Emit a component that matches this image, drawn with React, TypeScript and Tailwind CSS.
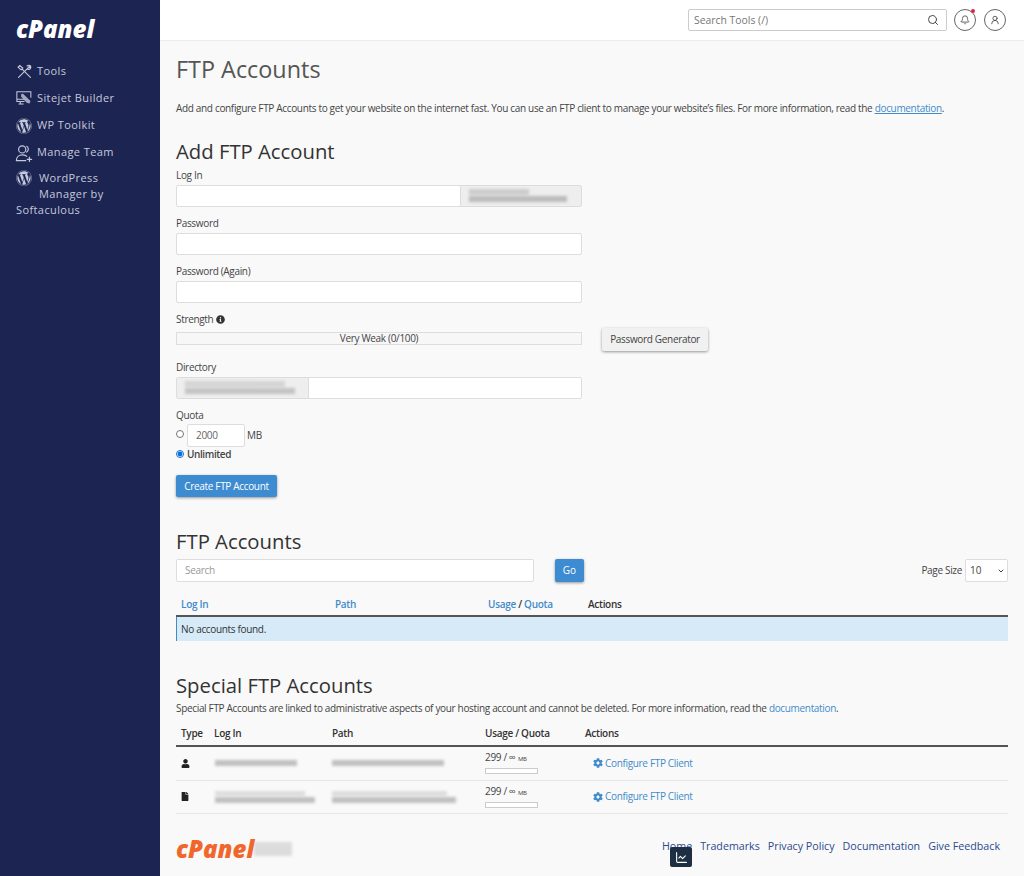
import { Bell, ChartLine, ChevronDown, Search, UserRound } from "lucide-react";
import { FaCog, FaFile, FaInfoCircle, FaUser, FaWordpress } from "react-icons/fa";

const font = { fontFamily: '"Open Sans", sans-serif' };

const ToolsIcon = () => (
  <svg viewBox="0 0 20 20" className="w-[17px] h-[17px] shrink-0" fill="none" stroke="currentColor" strokeWidth="1.300" strokeLinecap="round">
    <path d="M3 17 14.500 5.500" />
    <path d="M13 3.500c1-1 2.500-1 3.500-.5L14.600 5l.7.8 2-1.800c.4 1-.1 2.400-1 3.200-.8.6-1.700.6-2.400.3" />
    <path d="M17 17 7.500 7.500" />
    <path d="M2.500 5 4.500 3 8 6 6 8z" />
  </svg>
);

const SitejetIcon = () => (
  <svg viewBox="0 0 20 20" className="w-[17px] h-[17px] shrink-0" fill="none" stroke="currentColor" strokeWidth="1.200">
    <path d="M10 13.500H1V2h16.500v7" />
    <path d="M1 11h9M5 13.500v3M3 16.500h6" />
    <path d="M6 5l2-1 9 9-1 3-3-.6-7-7.400z" fill="currentColor" stroke="none" opacity="0.8" />
  </svg>
);

const TeamIcon = () => (
  <svg viewBox="0 0 20 20" className="w-[18px] h-[18px] shrink-0" fill="none" stroke="currentColor" strokeWidth="1.300" strokeLinecap="round">
    <circle cx="8" cy="6" r="4" />
    <path d="M1.500 18.500c0-4 3-6.500 6.500-6.500 2 0 3.500.5 5 1.500M1.500 18.500H12" />
    <path d="M13 2.500c2.200.8 2.500 5 0 6.500" />
    <path d="M16 14.500v5M13.500 17h5" />
  </svg>
);

const NavItem = ({ icon, label }: { icon: React.ReactNode; label: string }) => (
  <div className="flex items-center gap-[5px] h-[27px] text-[#c5c9dc] text-[11px] tracking-[0.4px]">
    <span className="w-[16px] flex justify-center">{icon}</span>
    <span>{label}</span>
  </div>
);

const Sidebar = () => (
  <aside className="w-[160px] shrink-0 bg-[#1c2452] pl-[16px] pt-[17px]">
    <div className="h-[41px] text-white text-[24px] font-extrabold italic leading-[24px]">cPanel</div>
    <div>
      <NavItem icon={<ToolsIcon />} label="Tools" />
      <NavItem icon={<SitejetIcon />} label="Sitejet Builder" />
      <NavItem icon={<FaWordpress className="w-[16px] h-[16px]" />} label="WP Toolkit" />
      <NavItem icon={<TeamIcon />} label="Manage Team" />
      <div className="pt-[4px] text-[#c5c9dc] text-[11px] leading-[16px] tracking-[0.4px]">
        <div className="flex items-center gap-[7px]">
          <FaWordpress className="w-[16px] h-[16px]" />
          <span>WordPress</span>
        </div>
        <div className="pl-[23px]">Manager by</div>
        <div>Softaculous</div>
      </div>
    </div>
  </aside>
);

const Header = () => (
  <header className="h-[41px] shrink-0 bg-white border-b border-[#ececec] flex items-center justify-end gap-[8px] pr-[18px]">
    <div className="w-[259px] h-[22px] border border-[#ccc] rounded-[2px] flex items-center justify-between px-[5px] mr-[-1px] text-[10.400px] text-[#777]">
      <span className="mt-[1px]">Search Tools (/)</span>
      <Search className="w-[12px] h-[12px] text-[#444] mr-[2px]" strokeWidth={2} />
    </div>
    <div className="relative w-[22px] h-[22px] rounded-full border border-[#666] flex items-center justify-center">
      <Bell className="w-[10px] h-[10px] text-[#444]" strokeWidth={2} />
      <span className="absolute -top-[1px] right-[0px] w-[4px] h-[4px] rounded-full bg-[#e0263c]" />
    </div>
    <div className="w-[22px] h-[22px] rounded-full border border-[#666] flex items-center justify-center">
      <UserRound className="w-[10px] h-[10px] text-[#444]" strokeWidth={2} />
    </div>
  </header>
);

const Blur = ({ className }: { className: string }) => <div className={`bg-[#9a9a9a] blur-[1.500px] ${className}`} />;

const Label = ({ children }: { children: React.ReactNode }) => (
  <div className="h-[22px] pt-[4px] text-[10px] tracking-[-0.33px] leading-[16px] font-medium text-[#444]">{children}</div>
);

const Field = () => <input className="block w-full h-[22px] bg-white border border-[#ddd] rounded-[2px] outline-none" />;

const AddForm = () => (
  <section className="mt-[8px]">
    <h2 className="h-[27px] text-[20.300px] leading-[30px] font-medium text-[#333]">Add FTP Account</h2>
    <div className="w-[406px]">
      <Label>Log In</Label>
      <div className="flex h-[22px] border border-[#ddd] rounded-[2px] overflow-hidden">
        <input className="w-[283px] bg-white outline-none" />
        <div className="flex-1 bg-[#eeeeee] border-l border-[#ddd] px-[8px] pt-[3px] flex flex-col gap-[1px]">
          <Blur className="w-[60px] h-[6px] opacity-40" />
          <Blur className="w-[98px] h-[6px] opacity-60" />
        </div>
      </div>
      <div className="mt-[4px]"><Label>Password</Label></div>
      <Field />
      <div className="mt-[4px]"><Label>Password (Again)</Label></div>
      <Field />
      <div className="mt-[4px]">
        <Label>
          <span className="inline-flex items-center gap-[3px]">Strength <FaInfoCircle className="w-[9px] h-[9px] text-[#333]" /></span>
        </Label>
      </div>
    </div>
    <div className="relative w-[406px] mt-[3px] h-[13px] bg-[#f7f7f7] border border-[#ddd] text-center text-[10px] tracking-[-0.33px] leading-[11px] text-[#444]">
      Very Weak (0/100)
      <button className="absolute left-[425px] -top-[5px] w-[106px] h-[23px] bg-[#f1f1f1] rounded-[2px] shadow-[0_1px_3px_rgba(0,0,0,0.4)] text-[10px] tracking-[-0.33px] text-[#444]">
        Password Generator
      </button>
    </div>
    <div className="w-[406px] mt-[10px]">
      <Label>Directory</Label>
      <div className="flex h-[22px] border border-[#ddd] rounded-[2px] overflow-hidden">
        <div className="w-[132px] bg-[#eeeeee] border-r border-[#ddd] px-[8px] pt-[3px] flex flex-col gap-[1px]">
          <Blur className="w-[100px] h-[6px] opacity-30" />
          <Blur className="w-[110px] h-[6px] opacity-50" />
        </div>
        <input className="flex-1 bg-white outline-none" />
      </div>
      <div className="mt-[4px]"><Label>Quota</Label></div>
      <div className="flex items-center h-[24px] -mt-[2px] text-[10px] tracking-[-0.33px] text-[#444]">
        <input type="radio" name="quota" className="w-[8px] h-[8px] m-0 -mt-[2px]" />
        <input defaultValue="2000" className="ml-[3px] w-[58px] h-[23px] bg-white border border-[#ddd] rounded-[2px] pl-[8px] text-[10px] tracking-[-0.33px] text-[#666] outline-none" />
        <span className="ml-[2px]">MB</span>
      </div>
      <div className="flex items-center gap-[3px] h-[16px] mt-[-1px] text-[10px] tracking-[-0.4px] font-semibold text-[#444]">
        <input type="radio" name="quota" defaultChecked className="w-[8px] h-[8px] m-0 accent-[#0a6fd8]" />
        Unlimited
      </div>
      <button className="mt-[13px] block w-[101px] h-[22px] bg-[#3d8bd0] rounded-[2px] shadow-[0_1px_3px_rgba(0,0,0,0.4)] text-[10px] tracking-[-0.33px] text-white">
        Create FTP Account
      </button>
    </div>
  </section>
);

const Accounts = () => (
  <section className="mt-[28px]">
    <h2 className="h-[34px] text-[20.300px] leading-[32px] font-medium text-[#333]">FTP Accounts</h2>
    <div className="flex items-center h-[23px]">
      <div className="w-[358px] h-[23px] bg-white border border-[#ddd] rounded-[2px] px-[8px] text-[10px] tracking-[-0.33px] leading-[21px] text-[#999]">Search</div>
      <button className="ml-[21px] w-[29px] h-[23px] bg-[#3d8bd0] rounded-[2px] shadow-[0_1px_3px_rgba(0,0,0,0.4)] text-[10px] text-white">Go</button>
      <span className="ml-auto text-[10px] tracking-[-0.33px] text-[#444]">Page Size</span>
      <div className="relative ml-[3px]">
        <select defaultValue="10" className="block appearance-none w-[43px] h-[23px] bg-white border border-[#ddd] rounded-[2px] pl-[4px] text-[10px] text-[#444] outline-none">
          <option>10</option>
        </select>
        <ChevronDown className="absolute right-[3px] top-[8px] w-[8px] h-[8px] text-[#444]" strokeWidth={3} />
      </div>
    </div>
    <div className="flex items-center h-[25px] mt-[10px] pt-[2px] pl-[5px] border-b-2 border-[#555] text-[10px] tracking-[-0.3px] font-semibold">
      <span className="w-[154px] text-[#428bca]">Log In</span>
      <span className="w-[153px] text-[#428bca]">Path</span>
      <span className="w-[100px] text-[#428bca]">Usage <span className="text-[#333]">/</span> Quota</span>
      <span className="text-[#333]">Actions</span>
    </div>
    <div className="h-[24px] pl-[4px] bg-[#d6eaf8] border-l border-[#428bca] text-[10px] tracking-[-0.33px] leading-[24px] text-[#333]">No accounts found.</div>
  </section>
);

const SpecialRow = ({ icon, two }: { icon: React.ReactNode; two?: boolean }) => (
  <div className="flex h-[33.500px] items-center border-b border-[#e6e6e6]">
    <span className="w-[38px] pl-[5px] text-[#222]">{icon}</span>
    <div className="w-[118px] pl-[1px] flex flex-col gap-[1px]">
      {two && <Blur className="w-[90px] h-[5px] opacity-30" />}
      <Blur className={two ? "w-[100px] h-[6px] opacity-60" : "w-[82px] h-[6px] opacity-60"} />
    </div>
    <div className="w-[153px] flex flex-col gap-[1px]">
      {two && <Blur className="w-[115px] h-[5px] opacity-30" />}
      <Blur className={two ? "w-[124px] h-[6px] opacity-60" : "w-[112px] h-[6px] opacity-60"} />
    </div>
    <div className="w-[108px] pb-[1px]">
      <div className="text-[10px] tracking-[-0.33px] leading-[13px] text-[#444]">299 / ∞ <span className="text-[6px]">MB</span></div>
      <div className="w-[53px] h-[6px] mt-[2px] border border-[#ccc] bg-white" />
    </div>
    <div className="flex items-center gap-[2px] text-[10px] tracking-[-0.33px] text-[#428bca]">
      <FaCog className="w-[10px] h-[10px]" />
      Configure FTP Client
    </div>
  </div>
);

const Special = () => (
  <section className="mt-[28px]">
    <h2 className="h-[30px] text-[20.300px] leading-[32px] font-medium text-[#333]">Special FTP Accounts</h2>
    <p className="h-[20px] text-[10px] tracking-[-0.33px] leading-[18px] text-[#444]">
      Special FTP Accounts are linked to administrative aspects of your hosting account and cannot be deleted. For more information, read the{" "}
      <span className="text-[#428bca]">documentation</span>.
    </p>
    <div className="flex items-center h-[26px] mt-[2px] border-b-2 border-[#555] text-[10px] tracking-[-0.3px] font-semibold text-[#333]">
      <span className="w-[38px] pl-[5px]">Type</span>
      <span className="w-[118px]">Log In</span>
      <span className="w-[153px]">Path</span>
      <span className="w-[100px]">Usage / Quota</span>
      <span>Actions</span>
    </div>
    <SpecialRow icon={<FaUser className="w-[9px] h-[9px]" />} />
    <SpecialRow icon={<FaFile className="w-[8px] h-[9px]" />} two />
  </section>
);

const Footer = () => (
  <footer className="relative flex items-center mt-[20px] h-[30px] pr-[8px]">
    <span className="text-[24px] leading-[24px] font-extrabold italic text-[#f1662a]">cPanel</span>
    <Blur className="w-[38px] h-[14px] opacity-30" />
    <nav className="ml-auto mb-[6px] flex gap-[8px] text-[10.700px] text-[#2b4a8f]">
      <span>Home</span>
      <span>Trademarks</span>
      <span>Privacy Policy</span>
      <span>Documentation</span>
      <span>Give Feedback</span>
    </nav>
    <div className="absolute left-[494px] top-[13px] w-[22px] h-[20px] rounded-[2px] bg-[#1f2f43] flex items-center justify-center">
      <ChartLine className="w-[13px] h-[13px] text-white" strokeWidth={2} />
    </div>
  </footer>
);

export default function App() {
  return (
    <div className="flex h-[876px] overflow-hidden bg-[#f9f9f9]" style={font}>
      <Sidebar />
      <div className="flex-1 min-w-0 flex flex-col">
        <Header />
        <main className="flex-1 px-[16px]">
          <h1 className="mt-[11px] h-[34px] text-[23.400px] leading-[34px] text-[#555]">FTP Accounts</h1>
          <p className="mt-[14px] h-[28px] text-[10px] tracking-[-0.33px] leading-[16px] text-[#444]">
            Add and configure FTP Accounts to get your website on the internet fast. You can use an FTP client to manage your website’s files. For more information, read the{" "}
            <span className="text-[#428bca] underline">documentation</span>.
          </p>
          <AddForm />
          <Accounts />
          <Special />
          <Footer />
        </main>
      </div>
    </div>
  );
}
